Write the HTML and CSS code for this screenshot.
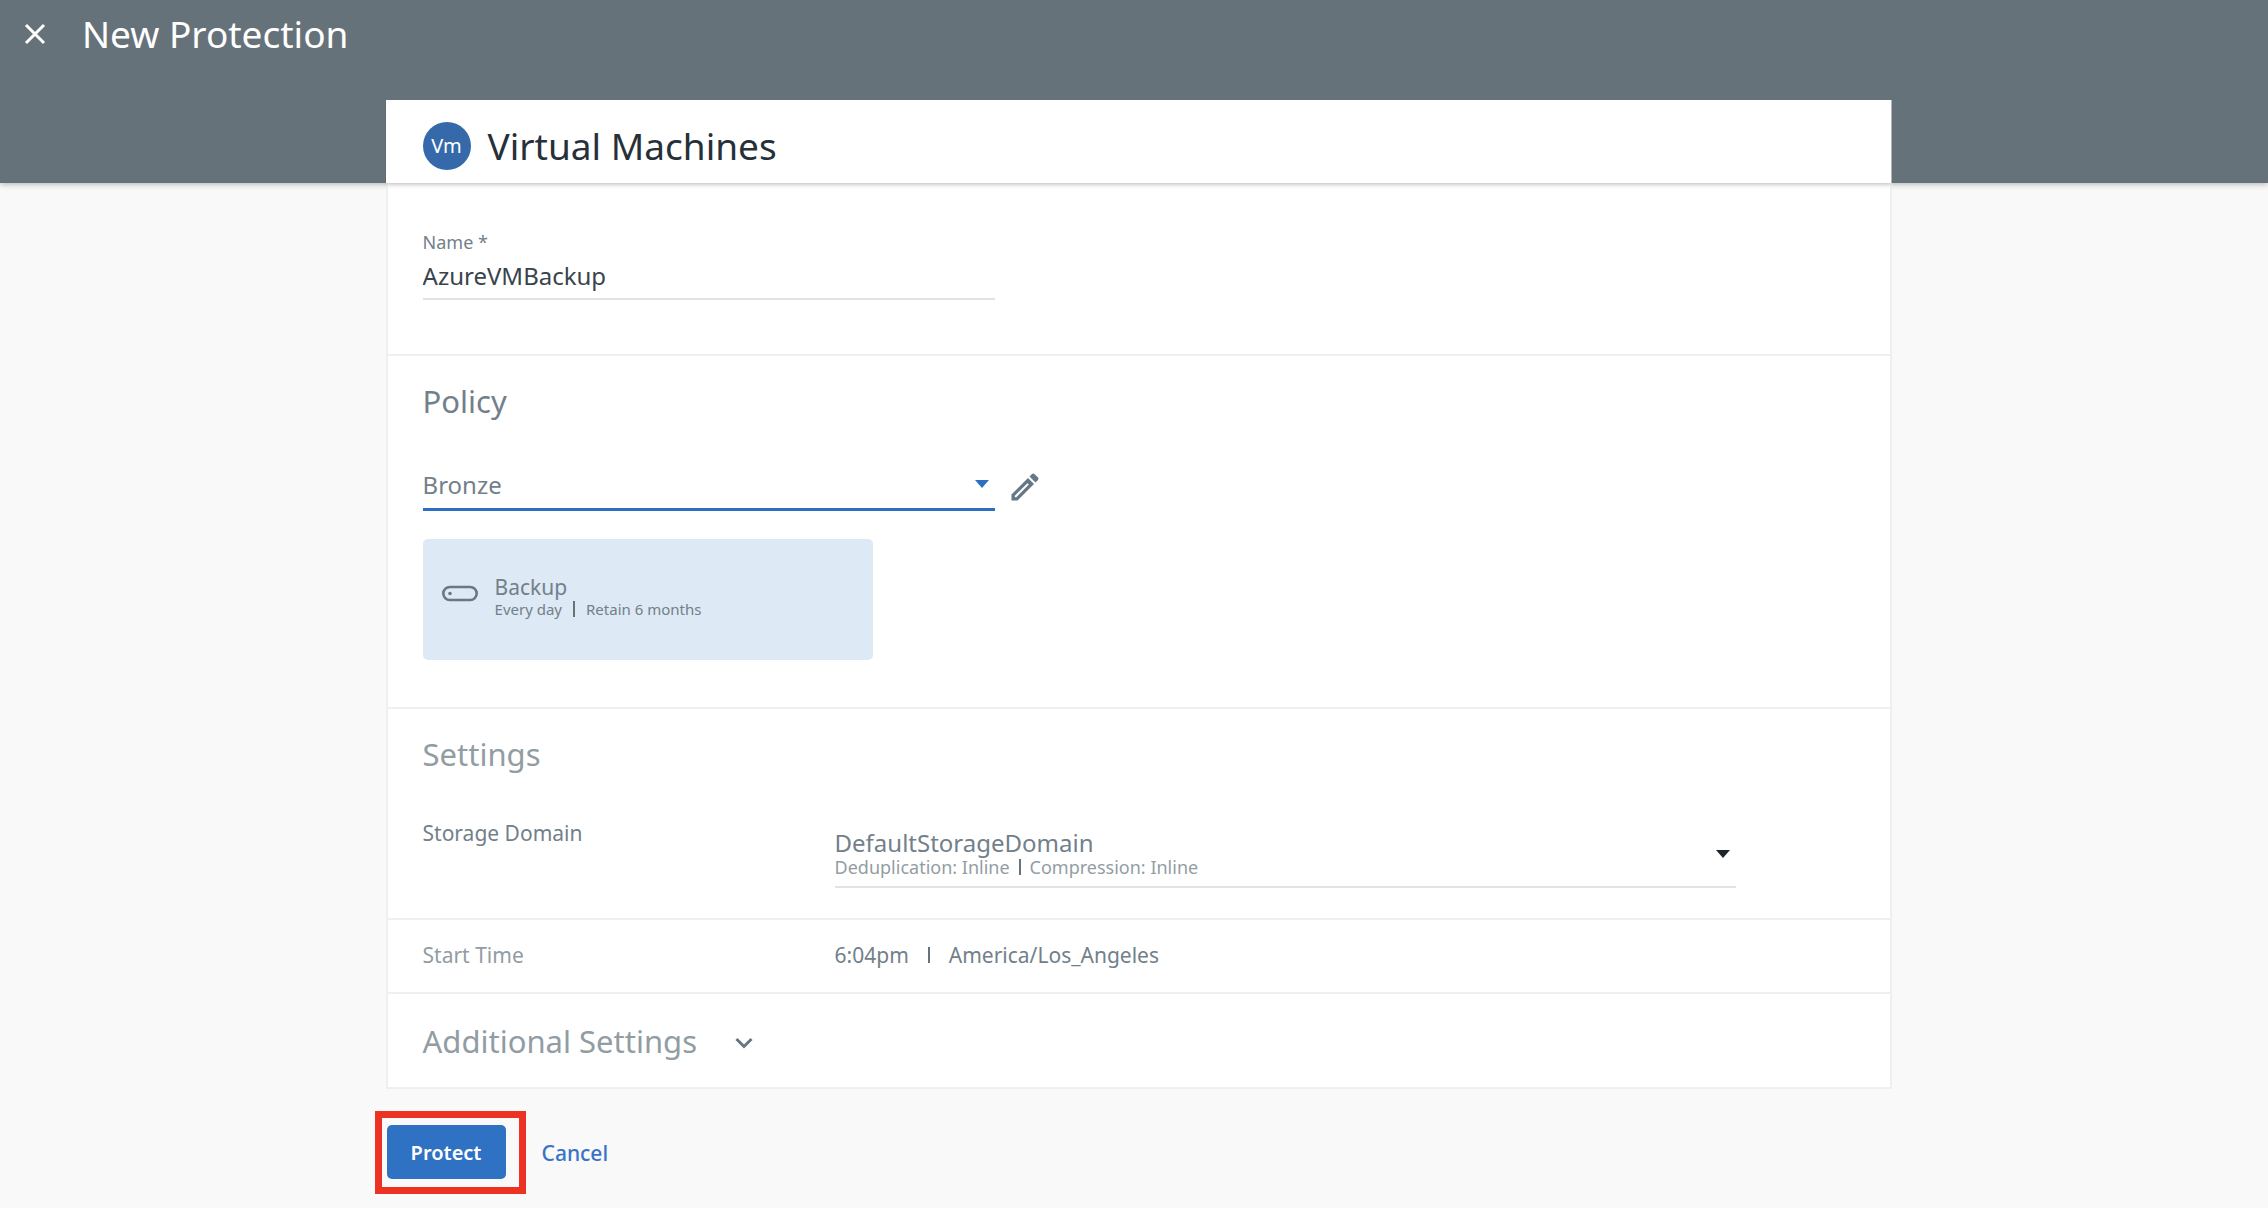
FILE: index.html
```html
<!DOCTYPE html>
<html lang="en">
<head>
    <meta charset="UTF-8">
    <meta name="viewport" content="width=device-width, initial-scale=1.0">
    <title>New Protection</title>
    <link rel="stylesheet" href="styles.css">
</head>
<body>

<header class="page-header">
    <button type="button" class="icon-btn" aria-label="Close">
        <svg width="22" height="22" viewBox="0 0 22 22"><path d="M2 2L20 20M20 2L2 20" fill="none" stroke="#fff" stroke-width="3"/></svg>
    </button>
    <h1>New Protection</h1>
</header>

<form class="protection-form" id="protectionForm">
    <div class="card-header">
        <span class="vm-badge">Vm</span>
        <h2>Virtual Machines</h2>
    </div>

    <div class="card">
        <section class="section section-name">
            <label for="name">Name *</label>
            <input type="text" id="name" value="AzureVMBackup" required>
        </section>

        <section class="section section-policy">
            <h3>Policy</h3>
            <div class="policy-row">
                <div class="select-field policy-select">
                    <select id="policy" aria-label="Policy">
                        <option>Bronze</option>
                    </select>
                    <svg class="arrow" width="14" height="8" viewBox="0 0 14 8"><path d="M0 0H14L7 8Z" fill="#2c6fc2"/></svg>
                </div>
                <button type="button" class="icon-btn" aria-label="Edit policy">
                    <svg width="28" height="28" viewBox="0 0 28 28">
                        <path d="M17 5L23 11L6.500 27.500H.5V21.500Z" fill="#667884"/>
                        <path d="M16.400 10.200L17.800 11.600L5.300 24.200H3.800V22.700Z" fill="#fff"/>
                        <path d="M18.500 3.500L21 1Q22.200 0 23.400 1L27 4.600Q28 5.800 27 7L24.500 9.500Z" fill="#667884"/>
                    </svg>
                </button>
            </div>
            <div class="backup-panel">
                <svg width="36" height="20" viewBox="0 0 36 20">
                    <rect x="1.300" y="3" width="33.400" height="13" rx="6.500" fill="none" stroke="#687984" stroke-width="2.600"/>
                    <circle cx="8" cy="9.500" r="1.800" fill="#687984"/>
                </svg>
                <div>
                    <div class="backup-title">Backup</div>
                    <div class="backup-info"><span>Every day</span><span class="divider"></span><span>Retain 6 months</span></div>
                </div>
            </div>
        </section>

        <section class="section section-settings">
            <h3 class="muted">Settings</h3>
            <div class="setting-row">
                <label for="storageDomain">Storage Domain</label>
                <div class="select-field domain-select">
                    <select id="storageDomain">
                        <option>DefaultStorageDomain</option>
                    </select>
                    <div class="domain-info"><span>Deduplication: Inline</span><span class="divider"></span><span>Compression: Inline</span></div>
                    <svg class="arrow" width="14" height="8" viewBox="0 0 14 8"><path d="M0 0H14L7 8Z" fill="#1b252b"/></svg>
                </div>
            </div>
        </section>

        <section class="section section-time">
            <div class="setting-row">
                <span class="muted">Start Time</span>
                <div class="time-value"><span>6:04pm</span><span class="divider"></span><span>America/Los_Angeles</span></div>
            </div>
        </section>

        <section class="section section-additional">
            <h3 class="muted">Additional Settings</h3>
            <button type="button" class="icon-btn" aria-label="Show additional settings">
                <svg width="18" height="18" viewBox="0 0 18 18"><path d="M1.500 7L9 14.500L16.500 7" fill="none" stroke="#687680" stroke-width="3"/></svg>
            </button>
        </section>
    </div>

    <div class="actions">
        <div class="highlight">
            <button type="submit" class="protect-btn">Protect</button>
        </div>
        <button type="button" class="cancel-btn">Cancel</button>
    </div>
</form>

</body>
</html>
```
FILE: styles.css
```css
* {
    box-sizing: border-box;
}
body {
    margin: 0;
    background-color: #f9f9f9;
    color: #72808a;
    font-family: "Noto Sans", "Open Sans", sans-serif;
    font-size: 21px;
    line-height: 28px;
}
h1, h2, h3 {
    margin: 0;
    font-weight: 400;
}
h1, h2 {
    font-size: 37px;
    line-height: 48px;
}
h3 {
    font-size: 31px;
    line-height: 44px;
}
button, input, select {
    font-family: inherit;
    padding: 0;
    border: none;
    background: none;
}
button {
    cursor: pointer;
}
svg {
    display: block;
}

/* Top bar */
.page-header {
    display: flex;
    align-items: flex-start;
    gap: 36px;
    height: 183px;
    padding: 10px 24px;
    background-color: #667279;
    color: #fff;
    box-shadow: 0 1px 6px rgba(0, 0, 0, 0.3);
}
.page-header .icon-btn {
    margin-top: 13px;
}

/* The form overlaps the top bar */
.protection-form {
    margin: -83px 16.6% 0 17%;
}
.card-header {
    position: relative;
    display: flex;
    align-items: center;
    gap: 17px;
    height: 83px;
    padding: 8px 37px 0;
    background-color: #fff;
    color: #273038;
    box-shadow: 0 1px 5px rgba(0, 0, 0, 0.3);
    clip-path: inset(0 0 -12px 0);
}
.vm-badge {
    width: 48px;
    height: 48px;
    border-radius: 50%;
    background-color: #3569aa;
    color: #fff;
    font-size: 20px;
    line-height: 48px;
    text-align: center;
}
.card {
    background-color: #fff;
    border: 2px solid #efefef;
    border-top: none;
}
.section {
    padding: 23px 35px 24px;
    border-bottom: 2px solid #efefef;
}
.section:last-child {
    border-bottom: none;
}
.muted {
    color: #919ca3;
}
.divider {
    display: inline-block;
    width: 2px;
    height: 16px;
    background-color: #65737c;
}

/* Name */
.section-name {
    padding-top: 47px;
    padding-bottom: 54px;
}
.section-name label {
    display: block;
    margin-bottom: 6px;
    font-size: 18px;
    line-height: 24px;
}
.section-name input {
    display: block;
    width: 572px;
    height: 40px;
    padding-bottom: 7px;
    border-bottom: 2px solid #e3e3e3;
    color: #39444c;
    font-size: 24px;
    outline: none;
}

/* Drop-downs */
.select-field {
    position: relative;
    border-bottom: 2px solid #e3e3e3;
}
.select-field select {
    display: block;
    width: 100%;
    height: 32px;
    appearance: none;
    color: inherit;
    font-size: 24px;
    outline: none;
}
.arrow {
    position: absolute;
    right: 6px;
    top: 12px;
    pointer-events: none;
}

/* Policy */
.section-policy {
    padding-bottom: 47px;
}
.policy-row {
    display: flex;
    gap: 16px;
    margin-top: 45px;
}
.policy-row .icon-btn {
    height: 38px;
}
.policy-select {
    width: 572px;
    padding-bottom: 8px;
    border-bottom: 3px solid #2c6fc2;
}
.backup-panel {
    display: flex;
    align-items: center;
    gap: 17px;
    width: 450px;
    height: 121px;
    margin-top: 28px;
    padding: 0 19px 5px;
    border-radius: 5px;
    background-color: #dde9f5;
}
.backup-panel svg {
    margin-bottom: 6px;
}
.backup-title {
    line-height: 24px;
}
.backup-info {
    display: flex;
    align-items: center;
    gap: 11px;
    font-size: 15px;
    line-height: 20px;
}

/* Settings */
.section-settings {
    padding-bottom: 30px;
}
.setting-row {
    display: flex;
}
.section-settings .setting-row {
    margin-top: 43px;
}
.setting-row > :first-child {
    width: 412px;
}
.domain-select {
    width: 901px;
    margin-top: 7px;
    padding-bottom: 10px;
}
.domain-select .arrow {
    top: 24px;
}
.domain-info {
    display: flex;
    align-items: center;
    gap: 9px;
    color: #939da3;
    font-size: 18px;
    line-height: 18px;
}
.section-time {
    padding-top: 21px;
    padding-bottom: 23px;
}
.time-value {
    display: flex;
    align-items: center;
    gap: 19px;
}
.section-additional {
    display: flex;
    align-items: center;
    gap: 38px;
    padding-top: 25px;
}

/* Buttons */
.actions {
    display: flex;
    align-items: center;
    gap: 16px;
    margin: 22px 0 12px -11px;
}
.highlight {
    padding: 7px 13px 8px 5px;
    border: 7px solid #ec3323;
}
.protect-btn {
    display: block;
    width: 119px;
    height: 54px;
    border-radius: 5px;
    background-color: #2f71c2;
    color: #fff;
    font-size: 20px;
    font-weight: 600;
}
.cancel-btn {
    color: #3a72c8;
    font-size: 21px;
    font-weight: 500;
}
```
